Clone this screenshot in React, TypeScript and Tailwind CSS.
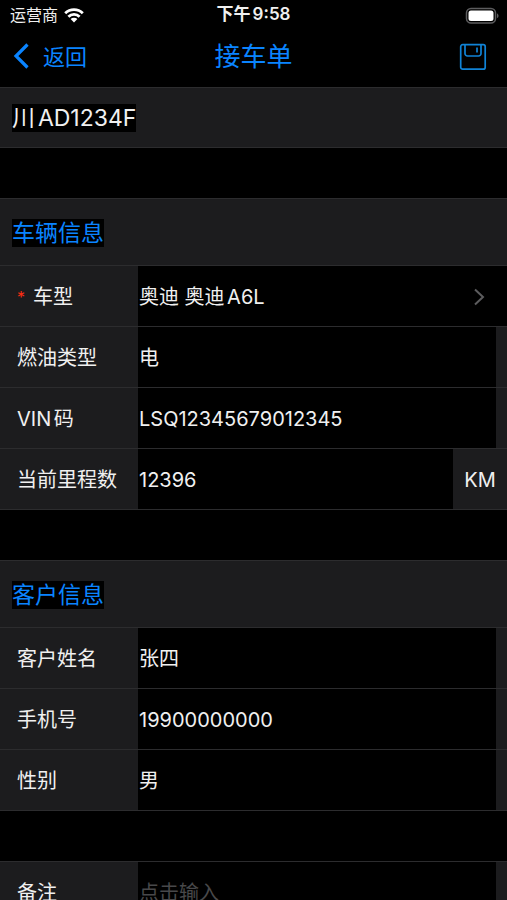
import React from "react";

interface FieldRowProps {
  id: string;
  label: string;
  value?: string;
  placeholder?: string;
  required?: boolean;
  unit?: string;
  className?: string;
}

const SectionHeader = ({ title }: { title: string }) => (
  <div className="flex h-[68px] items-center border-y border-[#2c2c2e] bg-[#1c1c1e] px-3 pt-0.5">
    <h2 className="bg-black text-[23px] leading-7 text-[#0a84ff]">{title}</h2>
  </div>
);

const RowLabel = ({
  id,
  label,
  required,
}: Pick<FieldRowProps, "id" | "label" | "required">) => (
  <label
    htmlFor={id}
    className="flex w-[138px] shrink-0 items-center gap-2 bg-[#1c1c1e] pt-0.5 pl-[17px]"
  >
    {required && <span className="text-base text-[#ff2d12]">*</span>}
    {label}
  </label>
);

const FieldRow = ({
  id,
  label,
  value,
  placeholder,
  unit,
  className = "",
}: FieldRowProps) => (
  <div
    className={`flex h-[61px] border-b border-[#2c2c2e] bg-[#1c1c1e] ${className}`}
  >
    <RowLabel id={id} label={label} />
    <input
      id={id}
      defaultValue={value}
      placeholder={placeholder}
      className="min-w-0 flex-1 bg-black pt-0.5 pl-px text-[#f0f0f0] outline-none placeholder:text-[#48484a]"
    />
    {unit ? (
      <span className="flex w-[54px] items-center justify-center pt-0.5">
        {unit}
      </span>
    ) : (
      <span className="w-[11px]" />
    )}
  </div>
);

const StatusBar = () => (
  <div className="grid h-[30px] grid-cols-3 items-center px-2 text-base text-[#f0f0f0]">
    <div className="flex items-center gap-1.5 pl-0.5">
      <span>运营商</span>
      <svg width="20" height="15" viewBox="0 0 20 15" fill="none">
        <path
          d="M1.2 5.2a12.6 12.6 0 0 1 17.6 0M4.4 8.7a8 8 0 0 1 11.2 0"
          stroke="white"
          strokeWidth="2.8"
        />
        <path d="M10 14.5 6.6 11.1a4.8 4.8 0 0 1 6.8 0z" fill="white" />
      </svg>
    </div>
    <span className="text-center text-[17px] font-semibold">下午9:58</span>
    <svg
      className="justify-self-end"
      width="34"
      height="17"
      viewBox="0 0 34 17"
      fill="none"
    >
      <rect
        x="1.5"
        y="1.5"
        width="29"
        height="14.5"
        rx="4.5"
        stroke="#5c5c5e"
        strokeWidth="1.5"
      />
      <rect x="3.5" y="3.5" width="25" height="10.5" rx="2.5" fill="white" />
      <path d="M32 6.500c2 .6 2 4 0 4.600z" fill="#5c5c5e" />
    </svg>
  </div>
);

const NavBar = () => (
  <header className="mb-1 grid h-[53px] grid-cols-3 items-center text-[#0a84ff]">
    <button
      type="button"
      className="flex items-center gap-3.5 justify-self-start pl-3 text-[22px]"
    >
      <svg width="17" height="26" viewBox="0 0 17 26" fill="none">
        <path
          d="M15.500 1.500 4 13l11.500 11.500"
          stroke="currentColor"
          strokeWidth="3.2"
        />
      </svg>
      <span className="pt-0.5">返回</span>
    </button>
    <h1 className="text-center text-[26px] leading-8">接车单</h1>
    <button
      type="button"
      aria-label="保存"
      className="justify-self-end pr-5 text-[#1083d6]"
    >
      <svg
        width="28"
        height="28"
        viewBox="0 0 28 28"
        fill="none"
        stroke="currentColor"
        strokeWidth="1.7"
      >
        <rect x="1.700" y="1.700" width="24.500" height="24.500" rx="2" />
        <path d="M6 1.700v8.800a2.500 2.500 0 0 0 2.500 2.500h11a2.500 2.500 0 0 0 2.500-2.500V1.700M18 4.500v5" />
      </svg>
    </button>
  </header>
);

const App = () => {
  return (
    <div className="flex h-screen flex-col bg-black font-['Inter','Noto_Sans_CJK_SC',sans-serif] text-xl text-[#f0f0f0] [text-autospace:normal]">
      <StatusBar />
      <NavBar />
      <main className="flex-1 overflow-y-auto [scrollbar-width:none]">
        <div className="flex h-[61px] items-center border-y border-[#2c2c2e] bg-[#1c1c1e] px-3">
          <span className="bg-black text-[23px] leading-7">川AD1234F</span>
        </div>

        <section className="mt-[50px]">
          <SectionHeader title="车辆信息" />
          <div className="flex h-[61px] border-b border-[#2c2c2e]">
            <RowLabel id="model" label="车型" required />
            <button
              id="model"
              type="button"
              className="flex flex-1 items-center justify-between pt-0.5 pr-[22px] pl-px text-left"
            >
              奥迪 奥迪A6L
              <svg width="12" height="18" viewBox="0 0 12 18" fill="none">
                <path
                  d="m2 1.500 8 7.500-8 7.500"
                  stroke="#5c5c5e"
                  strokeWidth="2"
                />
              </svg>
            </button>
          </div>
          <FieldRow id="fuel" label="燃油类型" value="电" />
          <FieldRow id="vin" label="VIN码" value="LSQ12345679012345" />
          <FieldRow id="mileage" label="当前里程数" value="12396" unit="KM" />
        </section>

        <section className="mt-[50px]">
          <SectionHeader title="客户信息" />
          <FieldRow id="name" label="客户姓名" value="张四" />
          <FieldRow id="phone" label="手机号" value="19900000000" />
          <FieldRow id="gender" label="性别" value="男" />
        </section>

        <section className="mt-[50px]">
          <FieldRow
            id="remark"
            label="备注"
            placeholder="点击输入"
            className="border-t"
          />
        </section>
      </main>
    </div>
  );
};

export default App;
